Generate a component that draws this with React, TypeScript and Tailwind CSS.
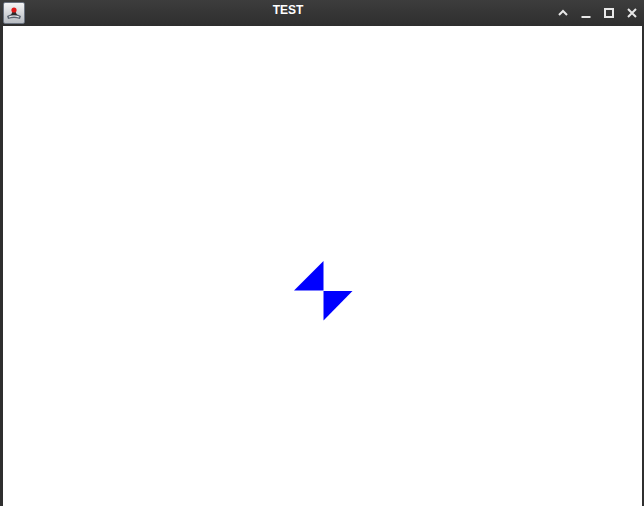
import { useState } from "react";

const TitleButton = ({ children, label }: { children: React.ReactNode; label: string }) => {
  return (
    <button aria-label={label} className="w-[23px] h-[22px] flex items-center justify-center text-[#e8e8e8]">
      {children}
    </button>
  );
};

const AppIcon = () => (
  <div className="w-[22px] h-[22px] rounded-[2px] bg-gradient-to-b from-[#f4f4f4] to-[#b8bcc2] border border-[#6b7380] flex items-center justify-center">
    <svg width="18" height="18" viewBox="0 0 18 18">
      <path d="M2 12 Q9 8 16 12 L15 15 Q9 13 3 15 Z" fill="#5a6470" />
      <path d="M6 11 L9 4 L12 11 Z" fill="#2c2c2c" />
      <circle cx="9" cy="6" r="2.6" fill="#e01818" />
      <path d="M4 13 Q9 11 14 13" stroke="#f0f0f0" strokeWidth="1.2" fill="none" />
    </svg>
  </div>
);

const App = () => {
  const [max, setMax] = useState(false);

  return (
    <div className="w-[644px] h-[506px] flex flex-col bg-[#2f2f2f] font-['Liberation_Sans',Arial,sans-serif]">
      <div className="h-[26px] flex items-center bg-gradient-to-b from-[#3d3d3d] to-[#2e2e2e] pl-[3px] pr-[1px]">
        <AppIcon />
        <div className="flex-1 text-center text-white font-bold text-[12px] -mt-[6px]">
          TEST
        </div>
        <div className="flex items-center -mt-[1px]">
          <TitleButton label="Shade">
            <svg width="12" height="12" viewBox="0 0 12 12">
              <path d="M2 8 L6 4 L10 8" stroke="currentColor" strokeWidth="2" fill="none" />
            </svg>
          </TitleButton>
          <TitleButton label="Minimize">
            <svg width="12" height="12" viewBox="0 0 12 12">
              <rect x="1.5" y="9" width="9" height="2" fill="currentColor" />
            </svg>
          </TitleButton>
          <TitleButton label="Maximize">
            <svg width="12" height="12" viewBox="0 0 12 12" onClick={() => setMax(!max)}>
              <rect x="2" y="2" width="8" height="8" stroke="currentColor" strokeWidth="2" fill="none" />
            </svg>
          </TitleButton>
          <TitleButton label="Close">
            <svg width="12" height="12" viewBox="0 0 12 12">
              <path d="M2 2 L10 10 M10 2 L2 10" stroke="currentColor" strokeWidth="2" fill="none" />
            </svg>
          </TitleButton>
        </div>
      </div>
      <div className="flex-1 flex pl-[3px] pr-[2px]">
        <div className="flex-1 bg-white relative">
          {/* canvas drawing, coords in canvas space */}
          <svg className="absolute inset-0" width="639" height="480">
            <polygon points="291,264.5 320.5,235 320.5,264.5" fill="#0000ff" />
            <polygon points="320.5,265 349.5,265 320.5,294.5" fill="#0000ff" />
          </svg>
        </div>
      </div>
    </div>
  );
};

export default App;
